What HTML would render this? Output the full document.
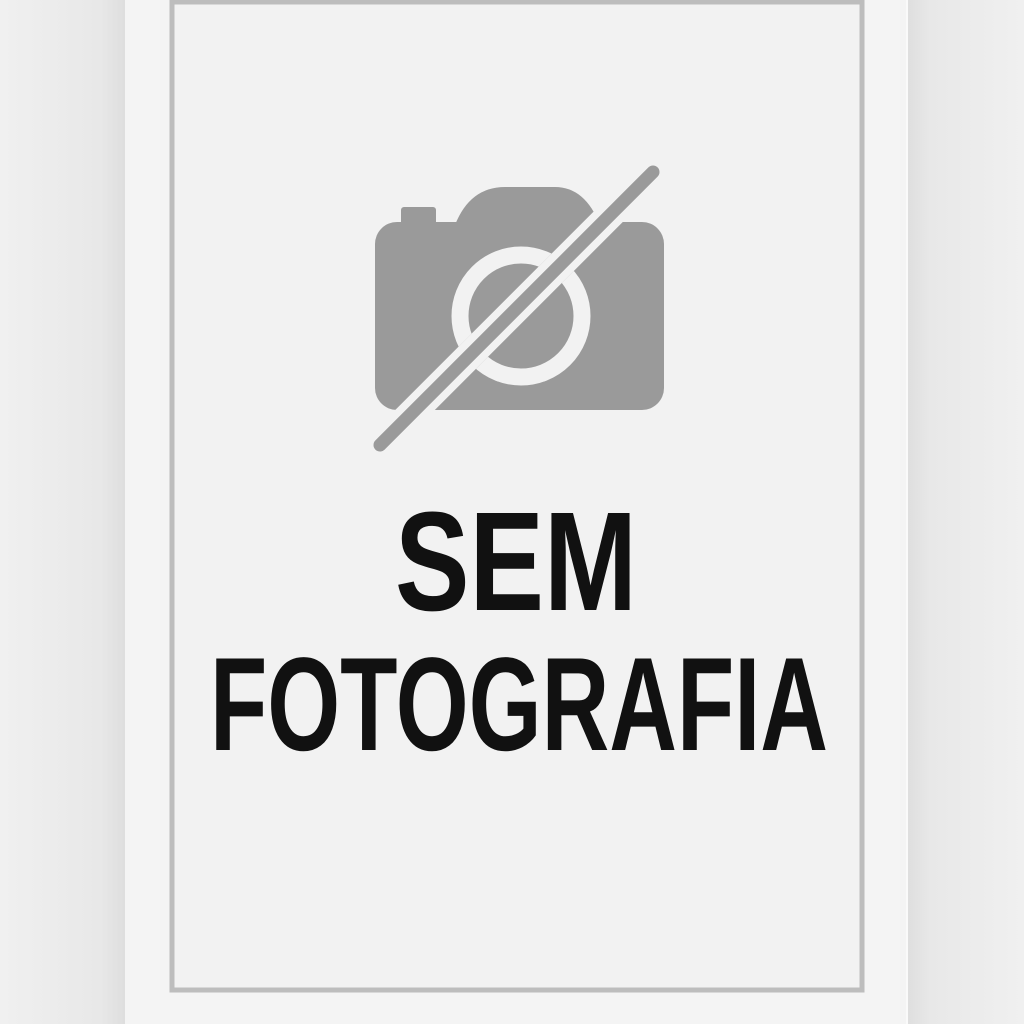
<!DOCTYPE html>
<html><head><style>
html,body{margin:0;padding:0;width:1024px;height:1024px;overflow:hidden;background:#ececec}
</style></head><body>
<svg width="1024" height="1024" viewBox="0 0 1024 1024" xmlns="http://www.w3.org/2000/svg">
<defs>
<linearGradient id="lg" x1="0" x2="1"><stop offset="0" stop-color="#f0f0f0"/><stop offset="0.8" stop-color="#e8e8e8"/><stop offset="1" stop-color="#dedede"/></linearGradient>
<linearGradient id="rg" x1="0" x2="1"><stop offset="0" stop-color="#dedede"/><stop offset="0.2" stop-color="#e8e8e8"/><stop offset="1" stop-color="#f0f0f0"/></linearGradient>
<mask id="m"><rect width="1024" height="1024" fill="#fff"/><line x1="380" y1="445" x2="653" y2="172" stroke="#000" stroke-width="28" stroke-linecap="round"/></mask>
</defs>
<rect x="0" y="0" width="125" height="1024" fill="url(#lg)"/>
<rect x="907" y="0" width="117" height="1024" fill="url(#rg)"/>
<rect x="125" y="0" width="782" height="1024" fill="#f4f4f4"/>
<rect x="906" y="0" width="2" height="1024" fill="#fafafa"/>
<rect x="172" y="2" width="690" height="988" fill="#f2f2f2" stroke="#bdbdbd" stroke-width="5"/>
<g mask="url(#m)" fill="#9a9a9a">
<rect x="401" y="207" width="35" height="22" rx="3"/>
<path d="M455 225 Q470 187 505 187 L555 187 Q585 187 600 225 Z"/>
<rect x="375" y="222" width="289" height="188" rx="22"/>
</g>
<g mask="url(#m)">
<circle cx="521" cy="316" r="61" fill="none" stroke="#f2f2f2" stroke-width="17"/>
</g>
<line x1="380" y1="445" x2="653" y2="172" stroke="#9a9a9a" stroke-width="13" stroke-linecap="round"/>
<g font-family="Liberation Sans, sans-serif" font-weight="bold" fill="#111">
<text x="395" y="610" font-size="141" textLength="242" lengthAdjust="spacingAndGlyphs">SEM</text>
<text x="210" y="750" font-size="133" textLength="618" lengthAdjust="spacingAndGlyphs">FOTOGRAFIA</text>
</g>
</svg>
</body></html>
